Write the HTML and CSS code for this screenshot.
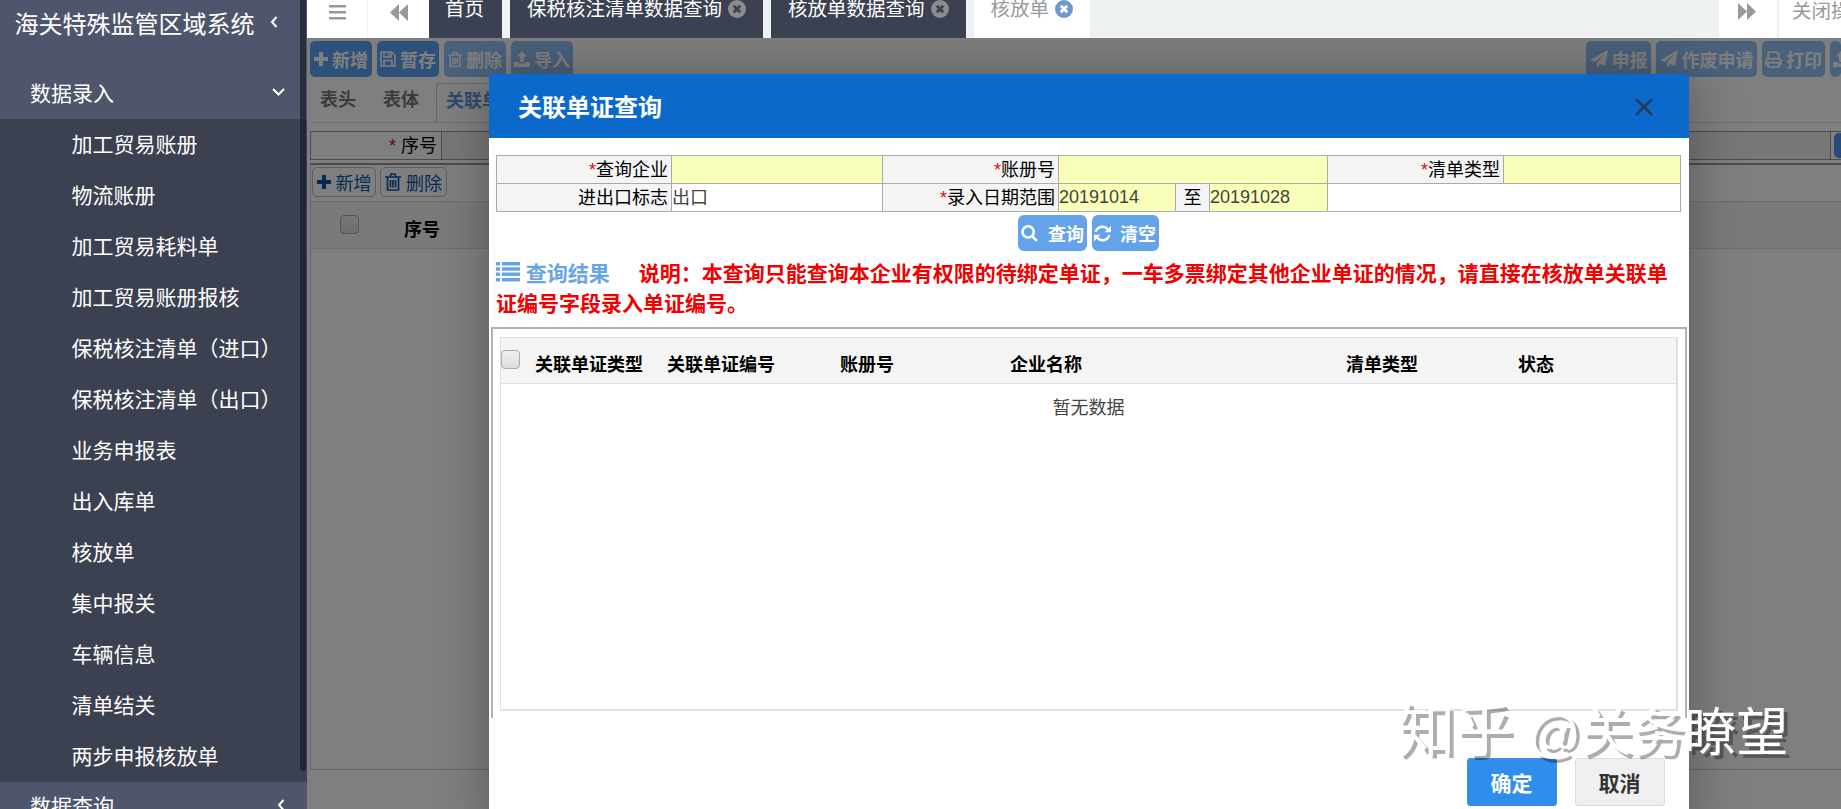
FILE: index.html
```html
<!DOCTYPE html>
<html lang="zh-CN">
<head>
    <meta charset="UTF-8">
    <meta name="viewport" content="width=device-width, initial-scale=1.0">
    <title>海关特殊监管区域系统</title>
    <link rel="stylesheet" href="styles.css">
</head>
<body>
    <!-- shared icons -->
    <svg class="sprite">
        <symbol id="plus" viewBox="0 0 14 14"><path d="M5 0h4v5h5v4H9v5H5V9H0V5h5z"/></symbol>
        <symbol id="save" viewBox="0 0 16 16"><path fill="none" stroke="currentColor" stroke-width="1.6" d="M1 1h10.5L15 4.500V15H1zM4 1v5h7V1M4 15V9.500h8V15M8.500 2v3"/></symbol>
        <symbol id="trash" viewBox="0 0 16 18"><path fill="none" stroke="currentColor" stroke-width="1.7" d="M0 4h16M5 4l1-3h4l1 3M2.500 4v13h11V4M5.500 7v7.500M8 7v7.500M10.500 7v7.500"/></symbol>
        <symbol id="upload" viewBox="0 0 16 16"><path d="M8 0l5 5.500h-3V11H6V5.500H3zM0 11h5v1.500h6V11h5v5H0z"/></symbol>
        <symbol id="plane" viewBox="0 0 18 18"><path d="M18 0l-3 16-5-2-3 4v-5.500L15 3.500 5 12 0 10z"/></symbol>
        <symbol id="print" viewBox="0 0 16 16"><path fill="none" stroke="currentColor" stroke-width="1.7" d="M3 8V1h8l2 2v5M3 12.500H1V9q0-1.500 1.500-1.500h11Q15 7.500 15 9v3.500h-2M3 11h10v4H3z"/></symbol>
        <symbol id="search" viewBox="0 0 16 16"><path fill="none" stroke="currentColor" stroke-width="2.400" d="M10.800 10.800L15 15M12 6.500a5.300 5.300 0 1 1-10.600 0a5.300 5.300 0 1 1 10.600 0z"/></symbol>
        <symbol id="refresh" viewBox="0 0 16 16"><path fill="none" stroke="currentColor" stroke-width="2.200" d="M1.500 6.500C3 1.500 9.500 0 13 4M14.500 9.500C13 14.500 6.500 16 3 12"/><path d="M16 .8v6h-6zM0 15.200v-6h6z"/></symbol>
        <symbol id="close" viewBox="0 0 18 18"><circle cx="9" cy="9" r="9"/><path fill="none" stroke="var(--cross)" stroke-width="3" d="M5.800 5.800l6.400 6.400M12.200 5.800l-6.400 6.400"/></symbol>
    </svg>

    <div class="app">
        <div class="sidebar">
            <div class="brand">
                <span>海关特殊监管区域系统</span>
                <svg class="chevron" width="8" height="12" viewBox="0 0 8 12"><path d="M6.500 1L2 6l4.500 5"/></svg>
            </div>
            <div class="menu-title">
                <span>数据录入</span>
                <svg class="chevron" width="13" height="8" viewBox="0 0 13 8"><path d="M1 1l5.500 5.500L12 1"/></svg>
            </div>
            <ul class="submenu">
                <li>加工贸易账册</li>
                <li>物流账册</li>
                <li>加工贸易耗料单</li>
                <li>加工贸易账册报核</li>
                <li>保税核注清单（进口）</li>
                <li>保税核注清单（出口）</li>
                <li>业务申报表</li>
                <li>出入库单</li>
                <li>核放单</li>
                <li>集中报关</li>
                <li>车辆信息</li>
                <li>清单结关</li>
                <li>两步申报核放单</li>
            </ul>
            <div class="menu-title">
                <span>数据查询</span>
                <svg class="chevron" width="8" height="12" viewBox="0 0 8 12"><path d="M6.500 1L2 6l4.500 5"/></svg>
            </div>
            <div class="scroll-thumb"></div>
        </div>

        <div class="main">
            <div class="tabbar">
                <div class="tool"><svg width="17" height="15" viewBox="0 0 17 15"><path d="M0 0h17v2.500H0zM0 6h17v2.500H0zM0 12h17v2.500H0z"/></svg></div>
                <div class="tool back"><svg width="18" height="17" viewBox="0 0 18 17"><path d="M9 0v17L0 8.500zM18 0v17L9 8.500z"/></svg></div>
                <div class="tab first">首页</div>
                <div class="tab">保税核注清单数据查询<svg class="tab-close"><use href="#close"/></svg></div>
                <div class="tab">核放单数据查询<svg class="tab-close"><use href="#close"/></svg></div>
                <div class="tab active">核放单<svg class="tab-close"><use href="#close"/></svg></div>
                <div class="tool forward"><svg width="18" height="17" viewBox="0 0 18 17"><path d="M0 0v17l9-8.500zM9 0v17l9-8.500z"/></svg></div>
                <div class="close-menu">关闭操作</div>
            </div>

            <div class="page">
                <div class="toolbar">
                    <button class="btn"><svg width="14" height="14"><use href="#plus"/></svg>新增</button>
                    <button class="btn"><svg width="16" height="16"><use href="#save"/></svg>暂存</button>
                    <button class="btn disabled"><svg width="14" height="17"><use href="#trash"/></svg>删除</button>
                    <button class="btn disabled"><svg width="16" height="16"><use href="#upload"/></svg>导入</button>
                    <div class="toolbar-right">
                        <button class="btn disabled send"><svg width="18" height="18"><use href="#plane"/></svg>申报</button>
                        <button class="btn disabled cancel"><svg width="18" height="18"><use href="#plane"/></svg>作废申请</button>
                        <button class="btn disabled print"><svg width="17" height="17"><use href="#print"/></svg>打印</button>
                        <button class="btn disabled export"><svg width="16" height="16"><use href="#upload"/></svg></button>
                    </div>
                </div>
                <div class="page-tabs">
                    <span>表头</span>
                    <span>表体</span>
                    <span class="current">关联单证</span>
                </div>
                <div class="filter">
                    <div class="filter-label"><i>*</i> 序号</div>
                    <div class="filter-value"></div>
                    <div class="filter-btn"></div>
                </div>
                <div class="grid">
                    <div class="grid-tools">
                        <button class="btn-line"><svg width="14" height="14"><use href="#plus"/></svg>新增</button>
                        <button class="btn-line"><svg width="16" height="20"><use href="#trash"/></svg>删除</button>
                    </div>
                    <div class="grid-head"><span class="check"></span><b>序号</b></div>
                </div>
            </div>
        </div>
    </div>

    <div class="shade"></div>

    <div class="modal">
        <div class="modal-head">
            <span>关联单证查询</span>
            <svg width="18" height="18" viewBox="0 0 18 18"><path d="M1 1l16 16M17 1L1 17"/></svg>
        </div>
        <div class="query">
            <div class="label"><i>*</i>查询企业</div>
            <div class="field required"></div>
            <div class="label"><i>*</i>账册号</div>
            <div class="field required wide"></div>
            <div class="label"><i>*</i>清单类型</div>
            <div class="field required"></div>
            <div class="label">进出口标志</div>
            <div class="field">出口</div>
            <div class="label"><i>*</i>录入日期范围</div>
            <div class="field required date">20191014</div>
            <div class="label to">至</div>
            <div class="field required date">20191028</div>
            <div class="field blank"></div>
        </div>
        <div class="query-btns">
            <button class="btn-query"><svg width="17" height="17"><use href="#search"/></svg>查询</button>
            <button class="btn-query clear"><svg width="17" height="17"><use href="#refresh"/></svg>清空</button>
        </div>
        <div class="result-title">
            <svg width="24" height="20" viewBox="0 0 24 20"><path d="M0 0h4v3.500H0zM6 0h18v3.500H6zM0 5.300h4v3.500H0zM6 5.300h18v3.500H6zM0 10.600h4v3.500H0zM6 10.600h18v3.500H6zM0 16h4v3.500H0zM6 16h18v3.500H6z"/></svg>
            <span class="result-name">查询结果</span><span class="notice">说明：本查询只能查询本企业有权限的待绑定单证，一车多票绑定其他企业单证的情况，请直接在核放单关联单证编号字段录入单证编号。</span>
        </div>
        <div class="result">
            <div class="table">
                <div class="table-head">
                    <span class="check"></span>
                    <span>关联单证类型</span>
                    <span>关联单证编号</span>
                    <span>账册号</span>
                    <span>企业名称</span>
                    <span>清单类型</span>
                    <span>状态</span>
                </div>
                <div class="empty">暂无数据</div>
            </div>
        </div>
        <div class="modal-foot">
            <button class="ok">确定</button>
            <button class="no">取消</button>
        </div>
    </div>

    <div class="watermark"><span>知乎</span> @关务瞭望</div>
</body>
</html>
```
FILE: styles.css
```css
* {
    box-sizing: border-box;
}
body {
    margin: 0;
    height: 809px;
    overflow: hidden;
    position: relative;
    font-family: "Liberation Sans", "Noto Sans CJK SC", sans-serif;
    font-size: 18px;
}
button {
    font-family: inherit;
    cursor: pointer;
}
svg {
    fill: currentColor;
    flex: none;
}
i {
    color: #e60012;
    font-style: normal;
}
.sprite {
    display: none;
}
.app {
    display: flex;
    height: 809px;
}

/* sidebar */
.sidebar {
    position: relative;
    width: 307px;
    flex: none;
    background: #3b4150;
    color: #fff;
    overflow: hidden;
}
.brand {
    height: 69px;
    padding: 7px 29px 0 14.5px;
    display: flex;
    justify-content: space-between;
    background: #4f566b;
    font-size: 24px;
    line-height: 36px;
}
.brand .chevron {
    margin-top: 9px;
}
.menu-title {
    height: 50px;
    padding: 0 22px 4px 30px;
    display: flex;
    justify-content: space-between;
    align-items: center;
    background: #4f566b;
    font-size: 21px;
}
.chevron path {
    fill: none;
    stroke: #fff;
    stroke-width: 2;
}
.submenu {
    list-style: none;
    margin: 0;
    padding: 0 0 0 71.5px;
    height: 663px;
    font-size: 21px;
    line-height: 51px;
}
.scroll-thumb {
    position: absolute;
    right: 1px;
    top: 0;
    width: 6px;
    height: 771px;
    border-radius: 0 0 3px 3px;
    background: rgba(22, 24, 35, .65);
}

/* top tabs */
.main {
    flex: 1;
    min-width: 0;
    display: flex;
    flex-direction: column;
}
.tabbar {
    height: 38px;
    display: flex;
    background: #eef2f3;
    overflow: hidden;
    font-size: 19.5px;
    color: #999;
}
.tool {
    width: 61px;
    padding: 2px 0 0 22px;
    flex: none;
    background: #fff;
    border-right: 1px solid #f2f2f2;
}
.tool.back {
    padding: 3px 0 0 22px;
    border-right: 0;
}
.tab {
    --cross: #3c4250;
    display: flex;
    padding: 0 17px;
    flex: none;
    margin-right: 8px;
    line-height: 28px;
    margin-top: -5px;
    background: #3b4150;
    color: #fff;
}
.tab.first {
    width: 73px;
    padding: 0 0 0 16px;
}
.tab-close {
    width: 18px;
    height: 18px;
    margin: 5px 0 0 6px;
    color: #8c8c8c;
}
.tab.active {
    --cross: #fff;
    background: #fff;
    color: #999;
}
.tab.active .tab-close {
    color: #7096cc;
}
.tool.forward {
    margin-left: auto;
    width: 60px;
    padding: 2px 0 0 19px;
    border-right: 2px solid #eee;
}
.close-menu {
    width: 62px;
    padding-left: 13px;
    line-height: 22px;
    white-space: nowrap;
    overflow: hidden;
    background: #fff;
}

/* page under the dialog */
.page {
    flex: 1;
    padding: 3px 0 0 3px;
    background: #fff;
    overflow: hidden;
}
.toolbar {
    display: flex;
    gap: 5px;
}
.toolbar-right {
    display: flex;
    gap: 5px;
    margin-left: auto;
}
.btn {
    display: flex;
    align-items: center;
    justify-content: center;
    gap: 4px;
    height: 36px;
    width: 62px;
    padding: 0;
    flex: none;
    border: 0;
    border-radius: 5px;
    background: #5ca3f5;
    color: #fff;
    font-size: 18px;
    font-weight: bold;
    white-space: nowrap;
}
.btn.disabled {
    opacity: .65;
}
.btn.send {
    width: 65px;
}
.btn.cancel {
    width: 101px;
}
.btn.print {
    width: 63px;
}
.btn.export {
    width: 11px;
    overflow: hidden;
    justify-content: flex-start;
    padding-left: 3px;
}
.page-tabs {
    display: flex;
    height: 46px;
    padding-top: 6px;
    border-bottom: 1px solid #ddd;
    font-weight: bold;
    line-height: 34px;
    color: #777;
}
.page-tabs span {
    padding: 0 10px;
    margin-right: 7px;
}
.page-tabs .current {
    border: 1px solid #ccc;
    border-bottom: 0;
    border-radius: 4px 4px 0 0;
    padding-left: 9px;
    color: #5a94dc;
}
.filter {
    display: flex;
    height: 29px;
    margin-top: 8px;
    border: 1px solid #999;
    border-right: 0;
}
.filter-label {
    width: 131px;
    padding-right: 4px;
    text-align: right;
    line-height: 28px;
    border-right: 1px solid #999;
}
.filter-value {
    flex: 1;
    background: #eee;
    border-right: 1px solid #999;
}
.filter-btn {
    width: 7px;
    margin: 1px 0 1px 3px;
    border-radius: 5px 0 0 5px;
    background: #4a98f0;
}
.grid {
    height: 607px;
    margin-top: 3px;
    border: 1px solid #ccc;
    border-top: 2px solid #999;
    border-right: 0;
}
.grid-tools {
    display: flex;
    gap: 4px;
    height: 36px;
    padding: 2px 0 0 1px;
}
.btn-line {
    display: flex;
    align-items: center;
    justify-content: center;
    gap: 5px;
    width: 64px;
    height: 30px;
    padding: 0;
    border: 1px solid #bbb;
    border-radius: 5px;
    background: #fff;
    color: #0a58a8;
    font-size: 18px;
}
.btn-line + .btn-line {
    width: 67px;
}
.grid-head {
    display: flex;
    align-items: center;
    gap: 45px;
    height: 48px;
    padding: 0 0 2px 29px;
    background: #f5f5f5;
    border: 1px solid #ddd;
    border-width: 1px 0;
}
.grid-head b {
    padding-top: 7px;
}
.check {
    width: 19px;
    height: 19px;
    border: 1px solid #aaa;
    border-radius: 4px;
    background: linear-gradient(#f0f0f0, #dcdcdc);
}
.shade {
    position: absolute;
    left: 307px;
    top: 38px;
    right: 0;
    bottom: 0;
    background: rgba(0, 0, 0, .5);
}

/* dialog */
.modal {
    position: absolute;
    left: 489px;
    top: 74px;
    width: 1200px;
    height: 760px;
    background: #fff;
    box-shadow: 1px 1px 50px rgba(0, 0, 0, .3);
    clip-path: inset(-36px -152px 0 -182px);
}
.modal-head {
    display: flex;
    align-items: center;
    justify-content: space-between;
    height: 64px;
    padding: 0 36px 0 29px;
    background: #0a69ca;
    color: #fff;
    font-size: 24px;
    font-weight: bold;
}
.modal-head span {
    padding-bottom: 2px;
}
.modal-head svg {
    margin-top: 2px;
}
.modal-head path {
    stroke: #243b5c;
    stroke-width: 2.8;
}
.query {
    display: grid;
    grid-template-columns: 175px 211px 176px 117px 34px 118px 176px 177px;
    grid-template-rows: 28px 28px;
    width: 1185px;
    margin: 17px 0 0 7px;
    border: 1px solid #aaa;
    border-width: 1px 0 0 1px;
}
.label,
.field {
    border: 1px solid #aaa;
    border-width: 0 1px 1px 0;
    line-height: 28px;
    height: 28px;
}
.label {
    padding-right: 3px;
    text-align: right;
    background: #f4f4f4;
}
.label.to {
    padding: 0;
    text-align: center;
}
.field {
    color: #444;
}
.field.required {
    background: #f9ffb9;
}
.field.date {
    line-height: 27px;
}
.field.wide {
    grid-column: span 3;
}
.field.blank {
    grid-column: span 2;
}
.query-btns {
    display: flex;
    gap: 5px;
    padding-left: 529px;
    margin-top: 3px;
}
.btn-query {
    display: flex;
    align-items: center;
    gap: 10px;
    width: 69px;
    height: 36px;
    padding: 0 0 0 3px;
    border: 0;
    border-radius: 6px;
    background: #64a3ea;
    color: #fff;
    font-size: 18px;
    font-weight: bold;
    white-space: nowrap;
}
.btn-query.clear {
    width: 67px;
    gap: 9px;
    padding-left: 2px;
}
.result-title {
    height: 76px;
    padding: 8px 12px 0 7px;
    font-size: 21px;
    font-weight: bold;
    line-height: 30px;
    color: #f00000;
}
.result-title svg {
    color: #69a5e4;
    vertical-align: -1px;
}
.result-name {
    color: #69a5e4;
    margin-right: 29px;
}
.result {
    height: 391px;
    margin: 0 2px;
    padding: 8px 7px 7px 7px;
    border: 2px solid #b2b2b2;
    border-bottom: 0;
}
.table {
    height: 374px;
    border: 1px solid #e0e0e0;
    border-bottom-width: 2px;
    border-right-width: 2px;
}
.table-head {
    display: grid;
    grid-template-columns: 34px 132px 173px 170px 336px 172px 1fr;
    height: 46px;
    padding-top: 12px;
    background: #f4f4f4;
    border-bottom: 1px solid #e0e0e0;
    font-weight: bold;
    line-height: 31px;
}
.empty {
    padding-top: 9px;
    text-align: center;
    line-height: 30px;
    color: #444;
}
.modal-foot {
    display: flex;
    justify-content: flex-end;
    gap: 18px;
    padding: 40px 24px 0 0;
}
.modal-foot button {
    width: 90px;
    height: 48px;
    padding: 0 1px 1px 0;
    border: 1px solid #dcdcdc;
    border-radius: 3px;
    background: #f0f0f0;
    color: #333;
    font-size: 21px;
    font-weight: bold;
}
.modal-foot .ok {
    border-color: #4a90d9;
    background: #2e8ded;
    color: #fff;
}
.watermark {
    position: absolute;
    left: 1397px;
    top: 693px;
    font-size: 52px;
    line-height: 76px;
    white-space: nowrap;
    color: #fff;
    text-shadow: 4px 4px 0 rgba(0, 0, 0, .32);
}
.watermark span {
    font-size: 58px;
}
```
